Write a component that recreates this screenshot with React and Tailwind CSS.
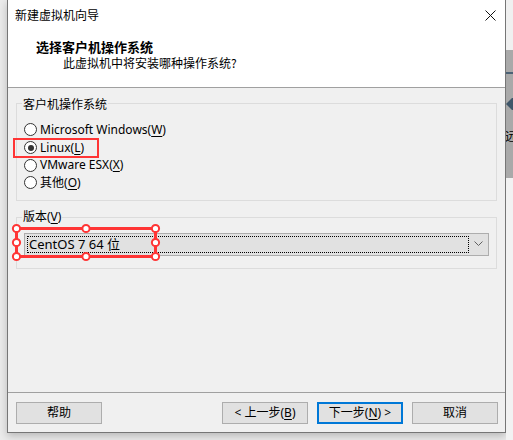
import React from "react";

const Key = ({ children }) => <span className="underline underline-offset-2">{children}</span>;

const Radio = ({ checked }) => (
  <span className="w-[13px] h-[13px] shrink-0 rounded-full border border-[#333333] bg-white flex items-center justify-center">
    {checked && <span className="w-[6px] h-[6px] rounded-full bg-[#333333]" />}
  </span>
);

const osList = [
  { id: 1, label: "Microsoft Windows", key: "W" },
  { id: 2, label: "Linux", key: "L", checked: true },
  { id: 3, label: "VMware ESX", key: "X" },
  { id: 4, label: "其他", key: "O" },
];

const Button = ({ children, primary }) => (
  <button
    className={
      primary
        ? "w-[86px] h-[22px] bg-[#e1e1e1] border-2 border-[#0078d7] flex items-center justify-center leading-none"
        : "w-[86px] h-[22px] bg-[#e1e1e1] border border-[#adadad] flex items-center justify-center leading-none"
    }
  >
    {children}
  </button>
);

const SelectionHandles = () => {
  const pts = [
    [6.5, 6.5], [76, 6.5], [145.5, 6.5],
    [6.5, 20.5], [145.5, 20.5],
    [6.5, 34.5], [76, 34.5], [145.5, 34.5],
  ];
  return (
    <svg width="152" height="41" className="absolute left-[-7px] top-[4px] pointer-events-none">
      <rect x="6.5" y="6.5" width="139" height="28" fill="none" stroke="#ff3535" strokeWidth="3" />
      {pts.map(([x, y], i) => (
        <circle key={i} cx={x} cy={y} r="3.6" fill="white" stroke="#ff3535" strokeWidth="2" />
      ))}
    </svg>
  );
};

export default function App() {
  return (
    <div className="w-[513px] h-[440px] overflow-hidden flex items-start bg-[#ebebeb] text-[12px] text-black font-['Noto_Sans','Noto_Sans_CJK_SC',sans-serif]">
      <div className="w-[7px] shrink-0" />

      {/* dialog */}
      <div className="w-[499px] h-[433px] shrink-0 flex flex-col border-x border-b border-[#767676] shadow-[0_3px_8px_rgba(0,0,0,0.22)]">
        {/* header */}
        <div className="h-[88px] shrink-0 bg-white border-b border-[#a0a0a0] flex flex-col">
          <div className="h-[30px] flex items-center justify-between pl-[7px] pr-[9px]">
            <span className="font-['Noto_Sans_CJK_SC',sans-serif]">新建虚拟机向导</span>
            <svg width="11" height="11" viewBox="0 0 11 11">
              <path d="M0.5 0.5 L10.5 10.5 M10.5 0.5 L0.5 10.5" stroke="#111" strokeWidth="1" />
            </svg>
          </div>
          <div className="mt-[9px] pl-[28px] h-[16px] leading-[16px] text-[13px] font-bold font-['Noto_Sans_CJK_SC',sans-serif]">
            选择客户机操作系统
          </div>
          <div className="pl-[55px] h-[16px] leading-[16px] font-['Noto_Sans_CJK_SC',sans-serif]">
            此虚拟机中将安装哪种操作系统?
          </div>
        </div>

        {/* body */}
        <div className="flex-1 bg-[#f0f0f0] px-[8px] pt-[15px]">
          <div className="relative border border-[#dcdcdc] pt-[17px] pb-[8px] pl-[7px]">
            <span className="absolute left-[5px] top-[-7px] px-[1px] leading-[16px] bg-[#f0f0f0]">客户机操作系统</span>
            {osList.map((os) => (
              <div key={os.id} className="relative h-[17.7px] flex items-center gap-[3px]">
                <Radio checked={os.checked} />
                <span className="leading-[16px]">
                  {os.label}(<Key>{os.key}</Key>)
                </span>
                {os.checked && (
                  <div className="absolute left-[-11px] top-[-1px] w-[86px] h-[20px] border-2 border-[#ff3535]" />
                )}
              </div>
            ))}
          </div>

          <div className="relative mt-[16px] border border-[#dcdcdc] pt-[15px] pb-[12px] px-[7px]">
            <span className="absolute left-[5px] top-[-9px] px-[1px] leading-[16px] bg-[#f0f0f0]">
              版本(<Key>V</Key>)
            </span>
            <div className="h-[23px] border border-[#adadad] bg-[#e1e1e1] flex items-center">
              <div className="ml-[2px] w-[442px] h-[17px] border border-dotted border-black flex items-center pl-[1px] leading-none text-[13px]">
                CentOS 7 64 位
              </div>
              <div className="flex-1 flex items-center justify-center">
                <svg width="9" height="6" viewBox="0 0 9 6">
                  <path d="M0.5 0.5 L4.5 4.5 L8.5 0.5" fill="none" stroke="#606060" strokeWidth="1" />
                </svg>
              </div>
            </div>
            <SelectionHandles />
          </div>
        </div>

        {/* footer */}
        <div className="h-[40px] shrink-0 bg-[#f0f0f0] border-t border-[#a0a0a0] pt-[9px] pl-[8px] pr-[7px] flex items-start justify-between">
          <Button>帮助</Button>
          <div className="flex gap-[9px]">
            <Button>
              &lt; 上一步(<Key>B</Key>)
            </Button>
            <Button primary>
              下一步(<Key>N</Key>) &gt;
            </Button>
            <Button>取消</Button>
          </div>
        </div>
      </div>

      {/* window behind, right edge */}
      <div className="w-[7px] h-[440px] shrink-0 flex flex-col overflow-hidden">
        <div className="h-[50px] bg-[#f0f0f0]" />
        <div className="h-[128px] bg-[#a9a9a9] flex flex-col items-start pt-[22px]">
          <div className="w-[7px] h-[2px] bg-[#4b6275]" />
          <svg width="7" height="12" viewBox="0 0 7 12" className="mt-[24px]">
            <path d="M0 6 L6 0 L7 0 L7 12 L6 12 Z" fill="#3f5669" />
          </svg>
          <span className="mt-[20px] ml-[-1px] leading-none text-[12px] font-['Noto_Sans_CJK_SC',sans-serif]">远</span>
        </div>
        <div className="flex-1 bg-[#f2f2f2]" />
      </div>
    </div>
  );
}
